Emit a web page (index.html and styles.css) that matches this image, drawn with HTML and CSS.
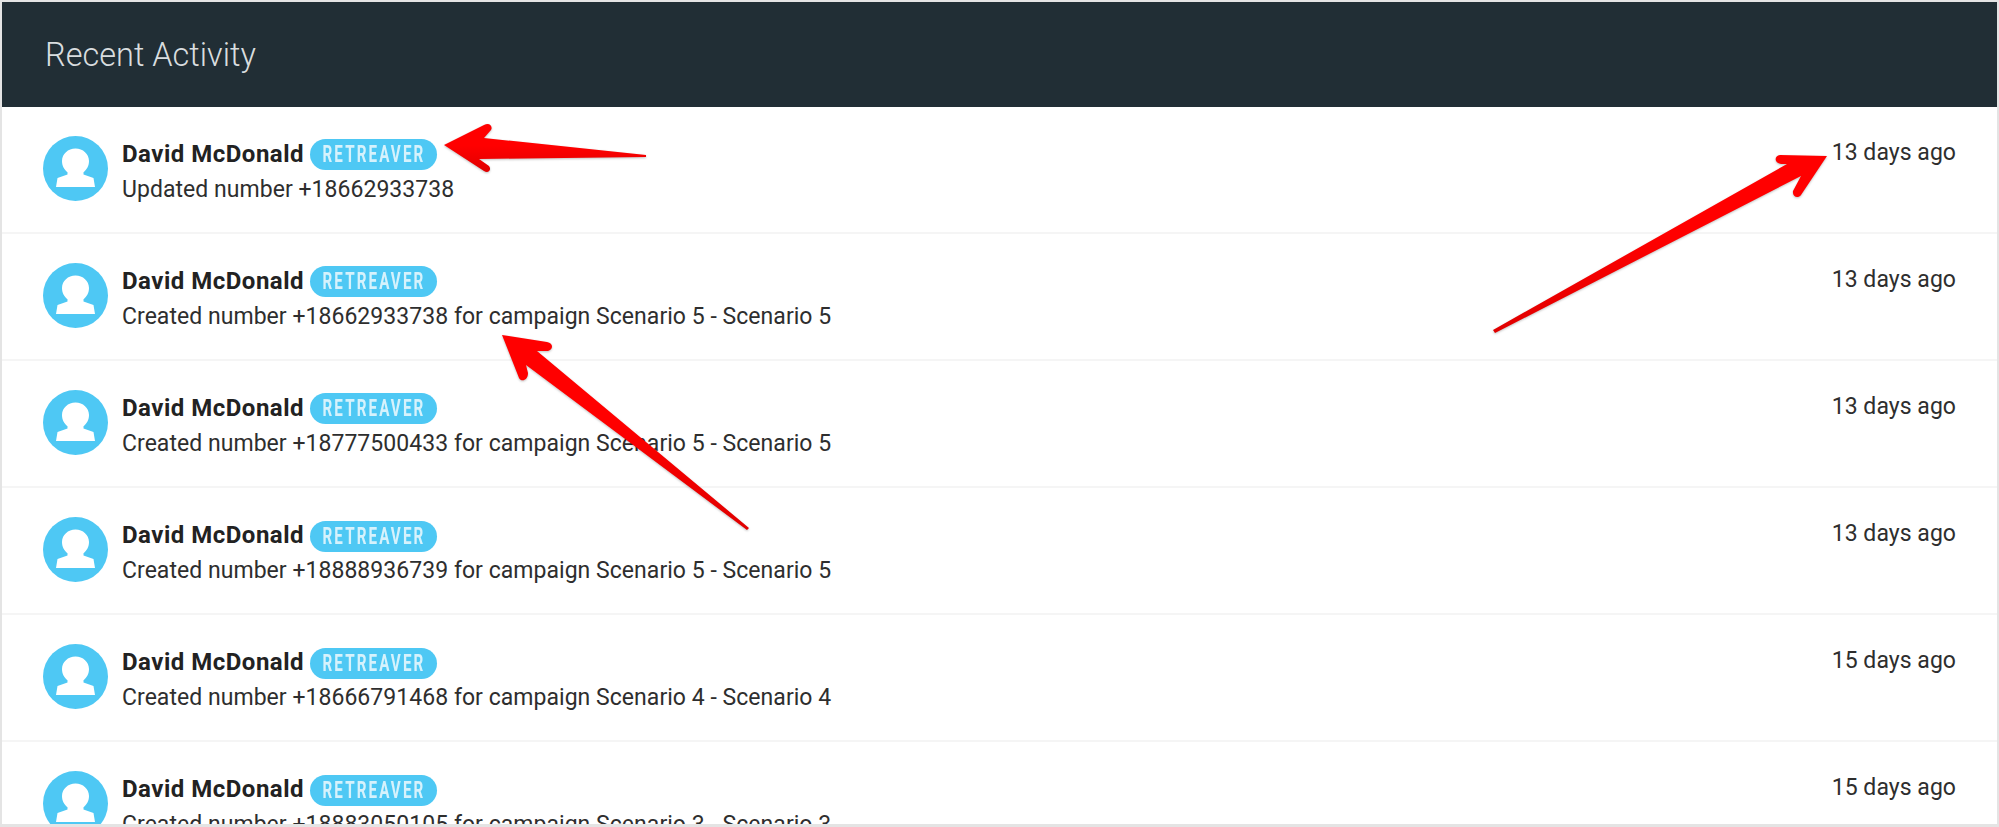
FILE: index.html

```html
<!DOCTYPE html>
<html lang="en">
<head>
    <meta charset="UTF-8">
    <title>Recent Activity</title>
    <link rel="stylesheet" href="styles.css">
</head>
<body>
    <svg width="0" height="0" class="defs">
        <symbol id="avatar" viewBox="0 0 65 65">
            <circle cx="32.5" cy="32.5" r="32.5" fill="#4ec8f4"/>
            <path d="M32.500 12.500c-7.500 0-13.500 5.500-13.500 12.500 0 4.800 2.200 8.800 5.500 11.200v2.300l-10 3.500-1.500 9h39l-1.500-9-10-3.500v-2.300c3.300-2.400 5.500-6.400 5.500-11.200 0-7-6-12.500-13.500-12.500z" fill="#fff"/>
        </symbol>
        <linearGradient id="arrow-shade" x1="0" y1="0" x2="0" y2="1">
            <stop offset="0.45" stop-color="#ff0000"/>
            <stop offset="1" stop-color="#e00000"/>
        </linearGradient>
    </svg>

    <div class="card">
        <div class="card-header">Recent Activity</div>

        <div class="row">
            <svg class="avatar"><use href="#avatar"/></svg>
            <div class="row-text">
                <div class="name-line"><span class="name">David McDonald</span><span class="tag"><span class="tag-text">RETREAVER</span></span></div>
                <div class="desc">Updated number +18662933738</div>
            </div>
            <div class="date">13 days ago</div>
        </div>
        <div class="row">
            <svg class="avatar"><use href="#avatar"/></svg>
            <div class="row-text">
                <div class="name-line"><span class="name">David McDonald</span><span class="tag"><span class="tag-text">RETREAVER</span></span></div>
                <div class="desc">Created number +18662933738 for campaign Scenario 5 - Scenario 5</div>
            </div>
            <div class="date">13 days ago</div>
        </div>
        <div class="row">
            <svg class="avatar"><use href="#avatar"/></svg>
            <div class="row-text">
                <div class="name-line"><span class="name">David McDonald</span><span class="tag"><span class="tag-text">RETREAVER</span></span></div>
                <div class="desc">Created number +18777500433 for campaign Scenario 5 - Scenario 5</div>
            </div>
            <div class="date">13 days ago</div>
        </div>
        <div class="row">
            <svg class="avatar"><use href="#avatar"/></svg>
            <div class="row-text">
                <div class="name-line"><span class="name">David McDonald</span><span class="tag"><span class="tag-text">RETREAVER</span></span></div>
                <div class="desc">Created number +18888936739 for campaign Scenario 5 - Scenario 5</div>
            </div>
            <div class="date">13 days ago</div>
        </div>
        <div class="row">
            <svg class="avatar"><use href="#avatar"/></svg>
            <div class="row-text">
                <div class="name-line"><span class="name">David McDonald</span><span class="tag"><span class="tag-text">RETREAVER</span></span></div>
                <div class="desc">Created number +18666791468 for campaign Scenario 4 - Scenario 4</div>
            </div>
            <div class="date">15 days ago</div>
        </div>
        <div class="row">
            <svg class="avatar"><use href="#avatar"/></svg>
            <div class="row-text">
                <div class="name-line"><span class="name">David McDonald</span><span class="tag"><span class="tag-text">RETREAVER</span></span></div>
                <div class="desc">Created number +18883050105 for campaign Scenario 3 - Scenario 3</div>
            </div>
            <div class="date">15 days ago</div>
        </div>
    </div>

    <!-- annotation arrows drawn on top of the screenshot -->
    <svg class="arrows" viewBox="0 0 1999 827">
        <g class="arrow">
            <path d="M444 145 L484 125 C490 122 493 127 491 130 L484 138 L646 155 L646 157 L479 159 L489 166 C492 170 488 174 484 171 Z"/>
            <path d="M1827 156 L1780 155 C1774 156 1774 163 1781 164 L1787 164 L1493 330 L1495 333 L1801 176 L1793 191 C1792 197 1798 199 1801 195 Z"/>
            <path d="M502 335 L547 342 C554 343 553 350 548 351 L537 351 L749 528 L747 530 L526 365 L528 373 C528 381 521 382 519 378 Z"/>
        </g>
    </svg>
</body>
</html>
```

FILE: styles.css

```css
html, body {height: 100%;}
body {margin: 0; padding: 2px 2px 3px 2px; box-sizing: border-box; background: #e4e4e4; font-family: Roboto, sans-serif; color: #2a2a2a; overflow: hidden;}
.defs {position: absolute;}
.card {height: 100%; background: #fff; overflow: hidden;}
.card-header {height: 104.5px; box-sizing: border-box; padding: 2px 0 0 43px; display: flex; align-items: center; background: #212e35; color: #d9dddf; font-size: 32.5px; font-weight: 300;}
.row {height: 127.2px; box-sizing: border-box; display: flex; align-items: flex-start; padding: 29px 41px 0 41px; border-bottom: 2px solid #f5f5f5;}
.avatar {width: 65px; height: 65px; flex: none;}
.row-text {flex: 1; margin-left: 14px;}
.name-line {display: flex; align-items: center; height: 36px;}
.name {font-size: 24px; font-weight: 700; letter-spacing: 0.5px; color: #222;}
.tag {display: inline-flex; align-items: center; justify-content: center; width: 127px; height: 31px; margin: 2px 0 0 6px; background: #4ec8f4; border-radius: 16px;}
.tag-text {display: inline-block; color: #d6f2fc; font-size: 23px; font-weight: 700; letter-spacing: 3.2px; transform: scaleX(0.66); white-space: nowrap;}
.desc {font-size: 23px; line-height: 30px; margin-top: 3px; letter-spacing: 0.04px; color: #2e2e2e;}
.date {font-size: 23px; margin-top: 3px; white-space: nowrap; letter-spacing: 0.04px; color: #2e2e2e;}
.arrows {position: absolute; left: 0; top: 0; width: 1999px; height: 827px;}
.arrow path {fill: url(#arrow-shade); filter: drop-shadow(0 1px 1px rgba(0,0,0,0.25));}
```
